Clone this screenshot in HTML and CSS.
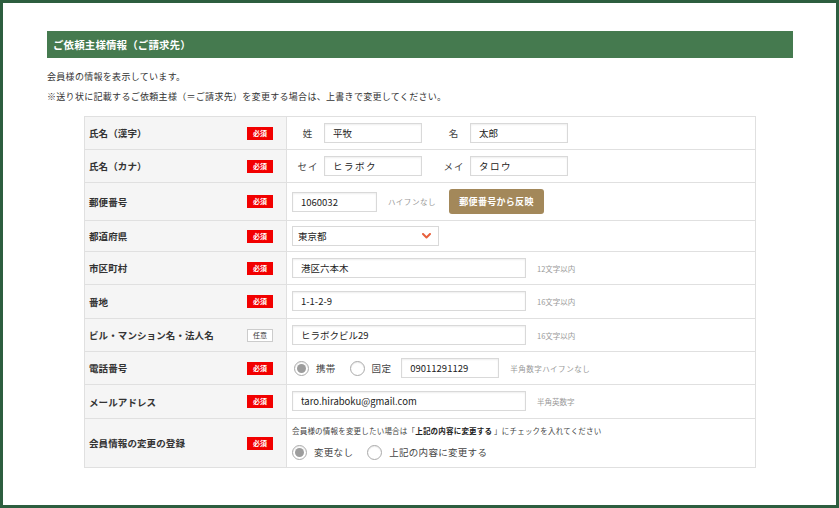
FILE: index.html
```html
<!DOCTYPE html>
<html lang="ja">
<head>
<meta charset="utf-8">
<title>ご依頼主様情報</title>
<link rel="stylesheet" href="styles.css">
</head>
<body>
<div class="frame">
  <div class="content">
    <h2 class="section-title">ご依頼主様情報（ご請求先）</h2>
    <div class="intro">
      <p>会員様の情報を表示しています。</p>
      <p>※送り状に記載するご依頼主様（＝ご請求先）を変更する場合は、上書きで変更してください。</p>
    </div>

    <div class="form-table">
      <div class="row">
        <div class="head"><span class="label">氏名（漢字）</span><span class="badge req">必須</span></div>
        <div class="cell">
          <span class="pre">姓</span><input class="input w97" type="text" value="平牧">
          <span class="pre gap">名</span><input class="input w97" type="text" value="太郎">
        </div>
      </div>
      <div class="row">
        <div class="head"><span class="label">氏名（カナ）</span><span class="badge req">必須</span></div>
        <div class="cell">
          <span class="pre">セイ</span><input class="input w97 kana" type="text" value="ヒラボク">
          <span class="pre gap">メイ</span><input class="input w97 kana" type="text" value="タロウ">
        </div>
      </div>
      <div class="row">
        <div class="head"><span class="label">郵便番号</span><span class="badge req">必須</span></div>
        <div class="cell">
          <input class="input w84" type="text" value="1060032">
          <span class="note spaced">ハイフンなし</span>
          <button class="btn" type="button">郵便番号から反映</button>
        </div>
      </div>
      <div class="row">
        <div class="head"><span class="label">都道府県</span><span class="badge req">必須</span></div>
        <div class="cell tight">
          <span class="select-wrap">
            <select class="select"><option>東京都</option></select>
            <svg class="chev" width="9" height="6" viewBox="0 0 9 6"><path d="M1 1 L4.5 4.5 L8 1" fill="none" stroke="#e8603c" stroke-width="2" stroke-linecap="round" stroke-linejoin="round"/></svg>
          </span>
        </div>
      </div>
      <div class="row">
        <div class="head"><span class="label">市区町村</span><span class="badge req">必須</span></div>
        <div class="cell">
          <input class="input w233" type="text" value="港区六本木">
          <span class="note">12文字以内</span>
        </div>
      </div>
      <div class="row">
        <div class="head"><span class="label">番地</span><span class="badge req">必須</span></div>
        <div class="cell tall">
          <input class="input w233" type="text" value="1-1-2-9">
          <span class="note">16文字以内</span>
        </div>
      </div>
      <div class="row">
        <div class="head"><span class="label">ビル・マンション名・法人名</span><span class="badge opt">任意</span></div>
        <div class="cell">
          <input class="input w233" type="text" value="ヒラボクビル29">
          <span class="note">16文字以内</span>
        </div>
      </div>
      <div class="row">
        <div class="head"><span class="label">電話番号</span><span class="badge req">必須</span></div>
        <div class="cell">
          <span class="radio on first"></span><span class="rlabel">携帯</span>
          <span class="radio r2"></span><span class="rlabel">固定</span>
          <input class="input w97 phone" type="text" value="09011291129">
          <span class="note spaced">半角数字ハイフンなし</span>
        </div>
      </div>
      <div class="row">
        <div class="head"><span class="label">メールアドレス</span><span class="badge req">必須</span></div>
        <div class="cell tall">
          <input class="input w233" type="text" value="taro.hiraboku@gmail.com">
          <span class="note">半角英数字</span>
        </div>
      </div>
      <div class="row">
        <div class="head"><span class="label">会員情報の変更の登録</span><span class="badge req">必須</span></div>
        <div class="cell stack">
          <p class="hint">会員様の情報を変更したい場合は「<b>上記の内容に変更する</b> 」にチェックを入れてください</p>
          <div class="radios">
            <span class="radio on"></span><span class="rlabel">変更なし</span>
            <span class="radio r3"></span><span class="rlabel">上記の内容に変更する</span>
          </div>
        </div>
      </div>
    </div>
  </div>
</div>
</body>
</html>
```

FILE: styles.css
```css
* { box-sizing: border-box; }

html, body {
  margin: 0;
  padding: 0;
}

body {
  background: #2d5e3f;
  font-family: "Noto Sans CJK JP", "Noto Sans", sans-serif;
  color: #333;
  width: 839px;
  height: 508px;
  padding: 3px;
}

.frame {
  background: #fff;
  height: 502px;
}

.content {
  padding: 28px 43px 0 44px;
}

.section-title {
  margin: 0;
  height: 27px;
  background: #457a4f;
  color: #fff;
  font-size: 10.5px;
  font-weight: bold;
  line-height: 27px;
  padding-left: 6px;
  letter-spacing: 0.1px;
}

.intro {
  margin: 9px 0 9px;
}

.intro p {
  margin: 0;
  font-size: 9px;
  line-height: 20px;
  letter-spacing: 0.3px;
  color: #333;
}

.form-table {
  margin: 0 37px;
  border: 1px solid #e0e0e0;
}

.row {
  display: grid;
  grid-template-columns: 201px 1fr;
  border-top: 1px solid #e0e0e0;
}

.row:first-child {
  border-top: none;
}

.head {
  background: #f5f5f5;
  display: flex;
  align-items: center;
  justify-content: space-between;
  padding: 0 13px 0 4px;
}

.label {
  font-size: 9.5px;
  font-weight: bold;
  letter-spacing: 0.1px;
  color: #333;
}

.badge {
  width: 26px;
  height: 13px;
  font-size: 7px;
  font-weight: bold;
  line-height: 13px;
  text-align: center;
}

.badge.req {
  background: #f20000;
  color: #fff;
}

.badge.opt {
  background: #fff;
  color: #333;
  border: 1px solid #ccc;
  line-height: 11px;
  font-weight: normal;
}

.cell {
  border-left: 1px solid #e0e0e0;
  display: flex;
  align-items: center;
  padding: 6px 6px 6px 5px;
}

.cell.tight {
  padding-top: 5px;
  padding-bottom: 5px;
}

.cell.tall {
  padding-bottom: 7px;
}

.pre {
  width: 32px;
  text-align: center;
  font-size: 9.5px;
  color: #444;
  letter-spacing: 1px;
}

.pre.gap {
  margin-left: 16px;
}

.input {
  height: 20px;
  border: 1px solid #d9d9d9;
  box-shadow: inset 0 1px 2px rgba(0, 0, 0, 0.07);
  font-family: "Noto Sans CJK JP", "Noto Sans", sans-serif;
  font-size: 9.5px;
  color: #222;
  padding: 0 8px;
  margin: 0;
  outline: none;
}

.input.kana {
  letter-spacing: 1.5px;
}

.w97 { width: 98px; }
.w84 { width: 85px; }
.w233 { width: 234px; }

.input.phone {
  margin-left: 10px;
}

.note {
  margin-left: 11px;
  font-size: 7.5px;
  color: #999;
}

.note.spaced {
  letter-spacing: 0.5px;
}

.btn {
  margin-left: 13px;
  height: 25px;
  width: 95px;
  padding: 0;
  border: none;
  border-radius: 3px;
  background: #a3885a;
  color: #fff;
  font-family: "Noto Sans CJK JP", "Noto Sans", sans-serif;
  font-size: 9px;
  font-weight: bold;
  letter-spacing: 0.3px;
}

.select-wrap {
  position: relative;
  display: inline-block;
}

.select {
  appearance: none;
  -webkit-appearance: none;
  width: 147px;
  height: 20px;
  border: 1px solid #d9d9d9;
  border-radius: 0;
  background: #fff;
  font-family: "Noto Sans CJK JP", "Noto Sans", sans-serif;
  font-size: 9.5px;
  color: #222;
  padding: 0 5px;
  margin: 0;
  display: block;
}

.chev {
  position: absolute;
  right: 8px;
  top: 7px;
}

.radio {
  width: 15px;
  height: 15px;
  border-radius: 50%;
  border: 1px solid #aaa;
  background: #fff;
  box-shadow: inset 0 1px 1px rgba(0, 0, 0, 0.08);
  position: relative;
  flex: none;
}

.radio.on::after {
  content: "";
  position: absolute;
  left: 2px;
  top: 2px;
  width: 9px;
  height: 9px;
  border-radius: 50%;
  background: #9d9d9d;
}

.radio.first {
  margin-left: 2px;
}

.radio.r2 {
  margin-left: 14px;
}

.radio.r3 {
  margin-left: 14px;
}

.rlabel {
  margin-left: 7px;
  font-size: 9.5px;
  color: #444;
  letter-spacing: 0.3px;
}

.cell.stack {
  flex-direction: column;
  align-items: flex-start;
  padding-top: 6px;
  padding-bottom: 7px;
}

.hint {
  margin: 0;
  font-size: 7.5px;
  line-height: 12px;
  color: #444;
  letter-spacing: 0.2px;
}

.hint b {
  color: #222;
}

.radios {
  display: flex;
  align-items: center;
  margin-top: 7px;
  height: 16px;
}
```
